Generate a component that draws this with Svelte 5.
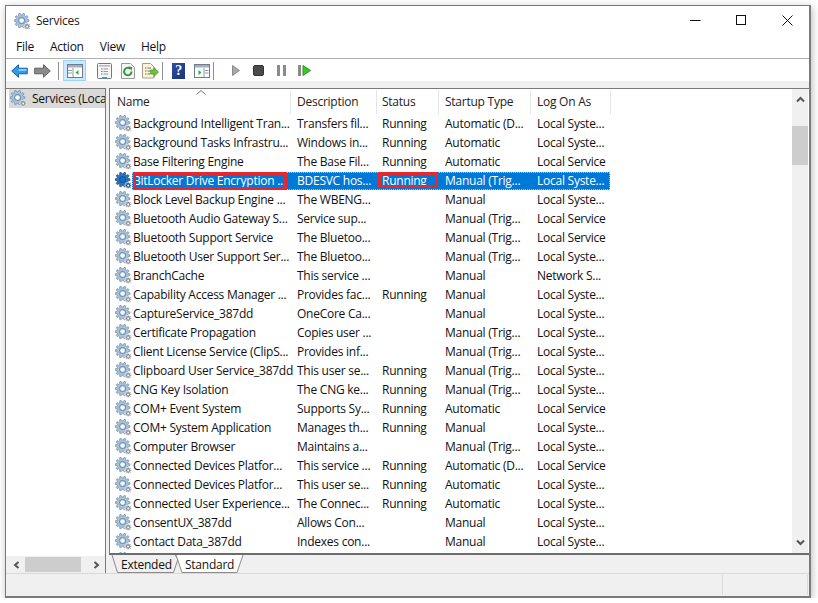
<script lang="ts">
  // name, description, status, startup type, log on as
  const rows: string[][] = [
    ['Background Intelligent Tran...', 'Transfers fil...', 'Running', 'Automatic (D...', 'Local Syste...'],
    ['Background Tasks Infrastru...', 'Windows in...', 'Running', 'Automatic', 'Local Syste...'],
    ['Base Filtering Engine', 'The Base Fil...', 'Running', 'Automatic', 'Local Service'],
    ['BitLocker Drive Encryption ...', 'BDESVC hos...', 'Running', 'Manual (Trig...', 'Local Syste...'],
    ['Block Level Backup Engine ...', 'The WBENG...', '', 'Manual', 'Local Syste...'],
    ['Bluetooth Audio Gateway S...', 'Service sup...', '', 'Manual (Trig...', 'Local Service'],
    ['Bluetooth Support Service', 'The Bluetoo...', '', 'Manual (Trig...', 'Local Service'],
    ['Bluetooth User Support Ser...', 'The Bluetoo...', '', 'Manual (Trig...', 'Local Syste...'],
    ['BranchCache', 'This service ...', '', 'Manual', 'Network S...'],
    ['Capability Access Manager ...', 'Provides fac...', 'Running', 'Manual', 'Local Syste...'],
    ['CaptureService_387dd', 'OneCore Ca...', '', 'Manual', 'Local Syste...'],
    ['Certificate Propagation', 'Copies user ...', '', 'Manual (Trig...', 'Local Syste...'],
    ['Client License Service (ClipS...', 'Provides inf...', '', 'Manual (Trig...', 'Local Syste...'],
    ['Clipboard User Service_387dd', 'This user se...', 'Running', 'Manual (Trig...', 'Local Syste...'],
    ['CNG Key Isolation', 'The CNG ke...', 'Running', 'Manual (Trig...', 'Local Syste...'],
    ['COM+ Event System', 'Supports Sy...', 'Running', 'Automatic', 'Local Service'],
    ['COM+ System Application', 'Manages th...', 'Running', 'Manual', 'Local Syste...'],
    ['Computer Browser', 'Maintains a...', '', 'Manual (Trig...', 'Local Syste...'],
    ['Connected Devices Platfor...', 'This service ...', 'Running', 'Automatic (D...', 'Local Service'],
    ['Connected Devices Platfor...', 'This user se...', 'Running', 'Automatic', 'Local Syste...'],
    ['Connected User Experience...', 'The Connec...', 'Running', 'Automatic', 'Local Syste...'],
    ['ConsentUX_387dd', 'Allows Con...', '', 'Manual', 'Local Syste...'],
    ['Contact Data_387dd', 'Indexes con...', '', 'Manual', 'Local Syste...'],
  ];
  const SELECTED = 3;
  const columns = ['Name', 'Description', 'Status', 'Startup Type', 'Log On As'];

  // Toothed outline around (cx, cy), used for both wheels of the service icon.
  function gearPath(cx: number, cy: number, outer: number, inner: number, teeth: number): string {
    const pts: string[] = [];
    const step = (Math.PI * 2) / teeth;
    for (let i = 0; i < teeth; i++) {
      const a = i * step;
      const corners = [
        [a - step * 0.32, inner],
        [a - step * 0.16, outer],
        [a + step * 0.16, outer],
        [a + step * 0.32, inner],
      ];
      for (const [ang, r] of corners) {
        pts.push(`${(cx + Math.cos(ang) * r).toFixed(2)},${(cy + Math.sin(ang) * r).toFixed(2)}`);
      }
    }
    return `M${pts.join('L')}Z`;
  }

  const bigGear = gearPath(7.6, 7.6, 7.4, 5.7, 10);
  const smallGear = gearPath(13.2, 13.4, 3.5, 2.5, 8);
</script>

{#snippet gear(selected = false)}
  <svg class="gear" viewBox="0 0 17 17" width="17" height="17" aria-hidden="true">
    <path d={bigGear} fill={selected ? '#2f74b8' : '#a9c2d8'} stroke={selected ? '#173f78' : '#6f8ba6'} stroke-width=".7" />
    <circle cx="7.6" cy="7.6" r="3.5" fill={selected ? '#1b5596' : '#6f93b5'} />
    <circle cx="7.6" cy="7.6" r="2.4" fill={selected ? '#0078d7' : '#f3f8fc'} />
    <path d={smallGear} fill={selected ? '#1c4f86' : '#8a8f96'} stroke="#fff" stroke-width=".6" />
    <circle cx="13.2" cy="13.4" r="1" fill="#fff" />
  </svg>
{/snippet}

<div class="window">
  <header class="titlebar">
    {@render gear()}
    <span class="title">Services</span>
    <div class="controls">
      <svg width="11" height="11" viewBox="0 0 11 11"><path d="M0 5.500h10.500" stroke="#111" fill="none" /></svg>
      <svg width="11" height="11" viewBox="0 0 11 11"><rect x=".5" y=".5" width="9" height="9" stroke="#111" fill="none" /></svg>
      <svg width="11" height="11" viewBox="0 0 11 11"><path d="M.5.500l10 10M10.500.500l-10 10" stroke="#111" fill="none" /></svg>
    </div>
  </header>

  <nav class="menubar">
    <span>File</span><span>Action</span><span>View</span><span>Help</span>
  </nav>

  <div class="toolbar">
    <span class="tool">
      <svg width="17" height="14" viewBox="0 0 17 14"><path d="M.7 7 7.500.8v3.400h8.800v5.600H7.500v3.400z" fill="#2f9be8" stroke="#1a66a8" /><path d="M7.500 5.200h8v1.600h-8z" fill="#9bd5fb" /></svg>
    </span>
    <span class="tool">
      <svg width="17" height="14" viewBox="0 0 17 14"><path d="M16.300 7 9.500.8v3.400H.7v5.600h8.800v3.400z" fill="#8a8a8a" stroke="#5f5f5f" /></svg>
    </span>
    <span class="sep first"></span>
    <span class="tool active">
      <svg width="16" height="14" viewBox="0 0 16 14"><rect x=".5" y=".5" width="15" height="13" fill="#fff" stroke="#6f7b88" /><path d="M1 1h14v2.500H1z" fill="#9fb0c0" /><path d="M6 4v9M1 6.500h4M1 9h4" stroke="#8a98a6" fill="none" /><path d="M11.500 6v5L8.500 8.500z" fill="#2fae3c" /></svg>
    </span>
    <span class="tool gap">
      <svg width="15" height="16" viewBox="0 0 15 16"><rect x=".5" y=".5" width="14" height="15" rx="1" fill="#f4f4f4" stroke="#777" /><path d="M2 2h11v1.600H2z" fill="#b5bcc3" /><path d="M4 6h1.500M4 8.500h1.500M4 11h1.500" stroke="#5b7fa3" fill="none" /><path d="M6.500 6H11M6.500 8.500H11M6.500 11H11" stroke="#999" fill="none" /><path d="M5 14h5v1.500H5z" fill="#2b9fe0" /></svg>
    </span>
    <span class="tool">
      <svg width="14" height="16" viewBox="0 0 14 16"><path d="M.5.500h9l4 4v11H.5z" fill="#f6f6f6" stroke="#9a9a9a" /><path d="M10.500 8.500a3.700 3.700 0 1 1-1.300-2.800" fill="none" stroke="#2f9a3a" stroke-width="2" /><path d="M7.500 3.200l3.800 1-.8 3.500z" fill="#2f9a3a" /></svg>
    </span>
    <span class="tool">
      <svg width="17" height="16" viewBox="0 0 17 16"><path d="M.5.500h8l3.500 3.500v11H.5z" fill="#fbf4dc" stroke="#a69f87" /><path d="M3 5h1.500M3 8h1.500M3 11h1.500M5.500 5H9M5.500 8H8M5.500 11H8" stroke="#77705c" fill="none" /><path d="M8.500 7h3.500V4.500L16.500 9 12 13.500V11H8.500z" fill="#6cc343" stroke="#3f9420" stroke-width=".7" /></svg>
    </span>
    <span class="sep"></span>
    <span class="tool help">?</span>
    <span class="tool">
      <svg width="16" height="14" viewBox="0 0 16 14"><rect x=".5" y=".5" width="15" height="13" fill="#fff" stroke="#6f7b88" /><path d="M1 1h14v2.500H1z" fill="#9fb0c0" /><path d="M10 4v9M11 6.500h3.500M11 9h3.500" stroke="#8a98a6" fill="none" /><path d="M4.500 6v5l3-2.500z" fill="#2fae3c" /></svg>
    </span>
    <span class="sep"></span>
    <span class="tool gap-sm">
      <svg width="8" height="11" viewBox="0 0 8 11"><path d="M.5.500 7.500 5.500.5 10.500z" fill="#a9a9a9" stroke="#8a8a8a" /></svg>
    </span>
    <span class="tool">
      <svg width="11" height="11" viewBox="0 0 11 11"><rect x=".5" y=".5" width="10" height="10" rx="1.500" fill="#4b4b4b" stroke="#333" /></svg>
    </span>
    <span class="tool">
      <svg width="9" height="11" viewBox="0 0 9 11"><path d="M0 0h3v11H0zM6 0h3v11H6z" fill="#8b8b8b" /></svg>
    </span>
    <span class="tool">
      <svg width="13" height="11" viewBox="0 0 13 11"><path d="M0 0h3v11H0z" fill="#8b8b8b" /><path d="M5 .5 12.500 5.500 5 10.500z" fill="#3fc32b" stroke="#2b9a1c" /></svg>
    </span>
  </div>

  <div class="panes">
    <aside class="tree">
      <div class="tree-body">
        <div class="tree-item">
          {@render gear()}
          <span>Services (Loca</span>
        </div>
      </div>
      <div class="hscroll">
        <svg width="8" height="8" viewBox="0 0 8 8"><path d="M5.500 1 2 4l3.500 3" fill="none" stroke="#555" stroke-width="2" /></svg>
        <div class="hthumb"></div>
        <svg width="8" height="8" viewBox="0 0 8 8"><path d="M2.500 1 6 4 2.500 7" fill="none" stroke="#555" stroke-width="2" /></svg>
      </div>
    </aside>

    <section class="detail">
      <div class="list-frame">
        <div class="list">
          <div class="list-head row-grid">
            {#each columns as col}
              <div class="head-cell">{col}</div>
            {/each}
            <svg class="sort" width="10" height="5" viewBox="0 0 10 5"><path d="M.5 4.500 5 .5l4.500 4" fill="none" stroke="#777" /></svg>
          </div>
          <div class="rows">
            {#each rows as row, r}
              <div class="row">
                {@render gear(r === SELECTED)}
                <div class="row-grid cells" class:selected={r === SELECTED}>
                  {#each row as cell, c}
                    <div class="cell" class:flag-name={r === SELECTED && c === 0} class:flag-status={r === SELECTED && c === 2}>{cell}</div>
                  {/each}
                </div>
              </div>
            {/each}
            <div class="row">{@render gear()}</div>
          </div>
        </div>
        <div class="vscroll">
          <svg width="9" height="8" viewBox="0 0 9 8"><path d="M1 6.500 4.500 3 8 6.500" fill="none" stroke="#555" stroke-width="2" /></svg>
          <div class="vtrack"><div class="vthumb"></div></div>
          <svg width="9" height="8" viewBox="0 0 9 8"><path d="M1 1.500 4.500 5 8 1.500" fill="none" stroke="#555" stroke-width="2" /></svg>
        </div>
      </div>
      <div class="tabs">
        <svg class="tab-lines" width="140" height="19" viewBox="0 0 140 19" aria-hidden="true">
          <path d="M3 0 8.500 17.500H64.500L69 4 66 0" fill="none" stroke="#8a8a8a" />
          <path d="M67 0 73 18H128L134 0z" fill="#fff" />
          <path d="M67 0 73 17.500H128L134 0" fill="none" stroke="#8a8a8a" />
        </svg>
        <span class="tab">Extended</span>
        <span class="tab">Standard</span>
      </div>
    </section>
  </div>

  <footer class="statusbar">
    <span class="status-main"></span>
    <span class="status-cell"></span>
  </footer>
</div>

<style>
  :global(body) {
    margin: 0;
    background: #fff;
  }

  .window {
    box-sizing: border-box;
    width: 806px;
    height: 593px;
    margin: 5px 0 0 5px;
    border: 1px solid #7a7a7a;
    border-width: 1px 2px 2px 1px;
    background: #fff;
    box-shadow: 1px 2px 8px rgba(0, 0, 0, 0.28);
    display: flex;
    flex-direction: column;
    font: 12px/16px "Open Sans", "Noto Sans", sans-serif;
    letter-spacing: -0.25px;
    color: #111;
    overflow: hidden;
  }

  .titlebar {
    height: 30px;
    flex: none;
    display: flex;
    align-items: center;
    padding-left: 8px;
  }

  .title {
    margin-left: 5px;
    color: #222;
  }

  .controls {
    margin-left: auto;
    display: flex;
    gap: 35px;
    padding: 0 16px 2px 0;
    align-items: center;
  }

  .menubar {
    height: 23px;
    flex: none;
    display: flex;
    align-items: center;
    gap: 16px;
    padding-left: 10px;
    border-bottom: 1px solid #b0b0b0;
    box-sizing: border-box;
  }

  .toolbar {
    height: 22px;
    flex: none;
    display: flex;
    align-items: center;
    padding: 1px 0 0 2px;
    box-sizing: border-box;
  }

  .tool {
    width: 23px;
    height: 21px;
    flex: none;
    display: flex;
    align-items: center;
    justify-content: center;
    box-sizing: border-box;
  }

  .tool.active {
    background: #cce8ff;
    border: 1px solid #99d1ff;
  }

  .tool.gap {
    margin-left: 7px;
  }

  .tool.gap-sm {
    margin-left: 6px;
  }

  .tool.help {
    width: 13px;
    height: 16px;
    margin: 0 5px;
    background: linear-gradient(135deg, #2c4fa5, #1c3478);
    color: #fff;
    font: bold 14px "Liberation Serif", serif;
  }

  .sep {
    width: 1px;
    height: 18px;
    flex: none;
    background: #8f8f8f;
    margin: 0 4px 0 0;
  }

  .sep.first {
    margin: 0 4px;
  }

  .panes {
    flex: 1;
    min-height: 0;
    display: flex;
    gap: 3px;
    background: #f0f0f0;
    padding-top: 7px;
  }

  .tree {
    width: 100px;
    flex: none;
    display: flex;
    flex-direction: column;
    background: #fff;
    border-top: 1px solid #7a7a7a;
    border-right: 1px solid #7a7a7a;
    box-sizing: border-box;
  }

  .tree-body {
    flex: 1;
    padding: 0 0 0 3px;
  }

  .tree-item {
    display: flex;
    align-items: center;
    gap: 5px;
    height: 19px;
    padding-left: 1px;
    background: #d9d9d9;
    white-space: nowrap;
    overflow: hidden;
  }

  .tree-item .gear {
    flex: none;
  }

  .hscroll {
    height: 17px;
    flex: none;
    display: flex;
    align-items: center;
    padding: 0 5px 0 7px;
    background: #f0f0f0;
  }

  .hthumb {
    width: 56px;
    height: 15px;
    margin: 0 auto 0 4px;
    background: #cdcdcd;
  }

  .detail {
    flex: 1;
    min-width: 0;
    display: flex;
    flex-direction: column;
  }

  .list-frame {
    height: 467px;
    flex: none;
    display: flex;
    background: #fff;
    border-top: 1px solid #7a7a7a;
    border-left: 1px solid #7a7a7a;
    border-bottom: 2px solid #6d6d6d;
    box-sizing: border-box;
  }

  .list {
    flex: 1;
    min-width: 0;
    overflow: hidden;
  }

  .row-grid {
    display: grid;
    grid-template-columns: 158px 86px 62px 92px 80px;
  }

  .list-head {
    position: relative;
    height: 25px;
    grid-template-columns: 181px 86px 62px 92px 80px;
    align-items: end;
  }

  .head-cell {
    height: 24px;
    line-height: 24px;
    padding-left: 6px;
    border-right: 1px solid #e5e5e5;
    color: #222;
  }

  .head-cell:first-child {
    padding-left: 7px;
  }

  .head-cell:nth-child(3) {
    padding-left: 5px;
  }

  .sort {
    position: absolute;
    left: 86px;
    top: 1px;
  }

  .rows {
    display: flex;
    flex-direction: column;
  }

  .row {
    height: 19px;
    flex: none;
    display: flex;
    align-items: center;
    padding-left: 5px;
  }

  .row .gear {
    flex: none;
  }

  .cells {
    height: 18px;
    line-height: 18px;
  }

  .cells.selected {
    background: #0078d7;
    color: #fff;
    outline: 1px dotted #9cc8ec;
    outline-offset: -1px;
  }

  .cell {
    position: relative;
    min-width: 0;
    padding-left: 7px;
    white-space: nowrap;
  }

  .cell:first-child {
    padding-left: 1px;
  }

  .cell:nth-child(3) {
    padding-left: 6px;
  }

  /* red annotation boxes painted over the selected row */
  .flag-name::after,
  .flag-status::after {
    content: '';
    position: absolute;
    border: 3px solid #e8262e;
  }

  .flag-name::after {
    inset: 0 3px 0 1px;
  }

  .flag-status::after {
    inset: 0 0 2px 2px;
  }

  .vscroll {
    width: 16px;
    flex: none;
    display: flex;
    flex-direction: column;
    align-items: center;
    background: #f0f0f0;
    padding: 6px 0;
    box-sizing: border-box;
    margin-right: 1px;
  }

  .vtrack {
    flex: 1;
    width: 100%;
    padding-top: 23px;
  }

  .vthumb {
    height: 39px;
    background: #cdcdcd;
  }

  .tabs {
    position: relative;
    flex: 1;
    display: flex;
    padding-left: 12px;
    line-height: 19px;
  }

  .tab-lines {
    position: absolute;
    left: 0;
    top: 0;
  }

  .tab {
    position: relative;
    width: 64px;
  }

  .statusbar {
    height: 23px;
    flex: none;
    display: flex;
    background: #f0f0f0;
    border-top: 1px solid #d9d9d9;
    box-sizing: border-box;
  }

  .status-main {
    width: 716px;
    border-right: 1px solid #d9d9d9;
    margin: 1px 0;
  }

  .status-cell {
    width: 84px;
    border-right: 1px solid #d9d9d9;
    margin: 1px 0;
  }
</style>
